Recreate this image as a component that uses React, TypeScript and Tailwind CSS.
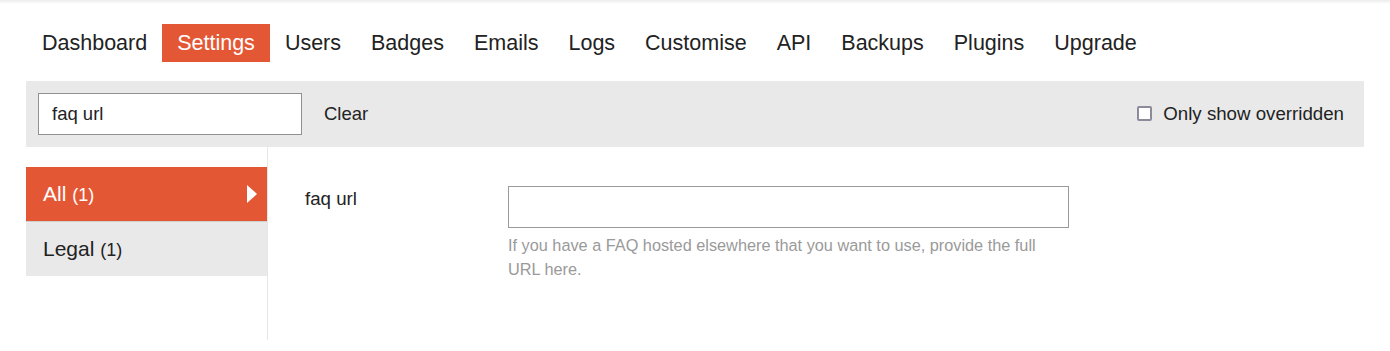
import React from "react";

const tabs = [
  "Dashboard",
  "Settings",
  "Users",
  "Badges",
  "Emails",
  "Logs",
  "Customise",
  "API",
  "Backups",
  "Plugins",
  "Upgrade",
];

export default function App() {
  return (
    <div
      className="min-h-[351px] bg-white text-[#222]"
      style={{ fontFamily: '"Liberation Sans", Arial, sans-serif' }}
    >
      <div className="h-[4px] bg-gradient-to-b from-[#ececec] to-white" />
      <div className="pl-[27px] pr-[26px] pt-[20px]">
        <nav className="flex">
          {tabs.map((t) => (
            <a
              key={t}
              className={
                "px-[15px] text-[21.5px] leading-[37px] pt-[1px] " +
                (t === "Settings" ? "bg-[#e45735] text-white" : "text-[#222]")
              }
            >
              {t}
            </a>
          ))}
        </nav>
      </div>

      <div className="px-[26px] pt-[19px]">
        <div className="flex h-[66px] items-center bg-[#e9e9e9] px-[12px]">
          <input
            defaultValue="faq url"
            className="h-[42px] w-[264px] border border-[#919191] bg-white px-[13px] text-[18.5px] text-[#222] outline-none"
          />
          <button className="ml-[22px] text-[18.5px] text-[#222]">Clear</button>
          <label className="ml-auto mr-[8px] flex items-center text-[18.7px] text-[#222]">
            <span className="mr-[11px] inline-block h-[15px] w-[15px] rounded-[2px] border-2 border-[#8d8a9a] bg-white" />
            Only show overridden
          </label>
        </div>

        <div className="flex">
          <aside className="w-[242px] border-r border-[#e6e6e6] pt-[20px] pb-[64px]">
            <div className="flex h-[55px] items-center justify-between border-b border-[#cfcfcf] bg-[#e45735] pl-[17px] pr-[9px] text-white">
              <span className="text-[21px]">
                All <span className="text-[18px]">(1)</span>
              </span>
              <svg width="12" height="18" viewBox="0 0 12 18">
                <path d="M1 0 L11 9 L1 18 Z" fill="#fff" />
              </svg>
            </div>
            <div className="flex h-[54px] items-center bg-[#e9e9e9] pl-[17px] text-[#222]">
              <span className="text-[21px]">
                Legal <span className="text-[18px]">(1)</span>
              </span>
            </div>
          </aside>

          <main className="flex-1 pl-[37px] pt-[39px]">
            <div className="flex">
              <div className="w-[203px] text-[18.7px] leading-[26px] text-[#222]">
                faq url
              </div>
              <div className="w-[561px]">
                <input className="h-[42px] w-full border border-[#9a9a9a] bg-white px-[10px] outline-none" />
                <p className="mt-[5px] text-[16.3px] leading-[24px] text-[#9a9a9a]">
                  If you have a FAQ hosted elsewhere that you want to use, provide
                  the full URL here.
                </p>
              </div>
            </div>
          </main>
        </div>
      </div>
    </div>
  );
}
